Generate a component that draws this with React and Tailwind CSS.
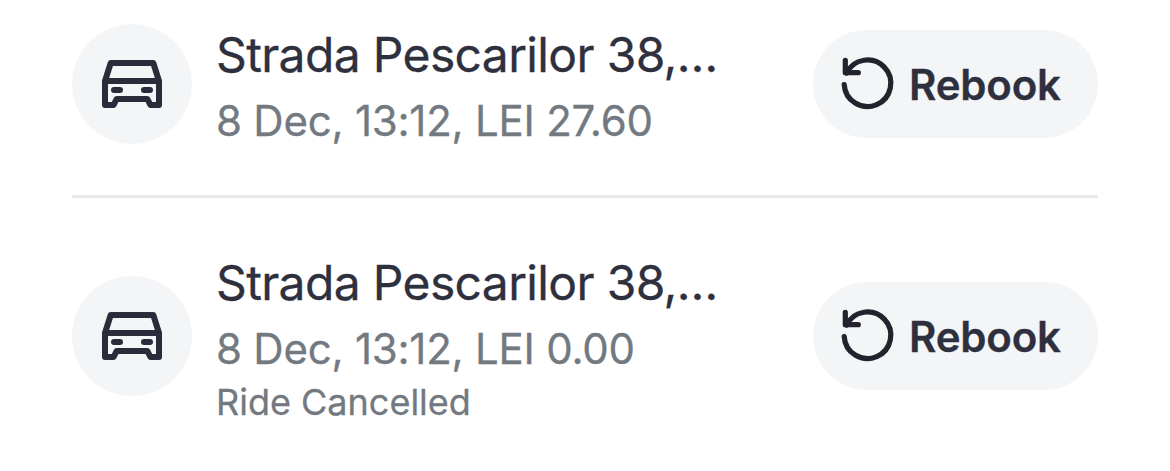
const rides = [
  { id: 1, address: "Strada Pescarilor 38,…", details: "8 Dec, 13:12, LEI 27.60" },
  { id: 2, address: "Strada Pescarilor 38,…", details: "8 Dec, 13:12, LEI 0.00", status: "Ride Cancelled" },
];

function CarIcon() {
  return (
    <svg className="h-12 w-[60px]" viewBox="0 0 60 48" fill="none" stroke="currentColor" strokeWidth="6" strokeLinejoin="round" strokeLinecap="round" aria-hidden="true">
      <path d="M3 21 8.7 3H51.3L57 21V45H48.4L45.4 39H14.6L11.6 45H3ZM3 21H57" />
      <path d="M12 30H18M42 30H48" />
    </svg>
  );
}

function RebookIcon() {
  return (
    <svg className="h-[54px] w-[54px] overflow-visible" viewBox="0 0 54 54" fill="none" stroke="currentColor" strokeWidth="5.2" strokeLinecap="round" strokeLinejoin="round" aria-hidden="true">
      <path d="M3.2 27.5A23.3 23.3 0 1 0 5.5 16.1" />
      <path d="M4.3 3.3V15.7H17.3" />
    </svg>
  );
}

function RideRow({ ride }) {
  return (
    <div className="flex items-center">
      <div className="flex h-[120px] w-[120px] shrink-0 items-center justify-center rounded-full bg-[#f4f5f7] text-[#2b2c3b]">
        <CarIcon />
      </div>
      <div className="ml-6 mt-px -mb-px min-w-0 flex-1 whitespace-nowrap">
        <div className="text-[48px] leading-[72px] tracking-[-0.65px] text-[#2f303e] [-webkit-text-stroke:0.3px_currentColor]">{ride.address}</div>
        <div className="text-[42px] leading-[60px] tracking-[-0.23px] text-[#727980] [-webkit-text-stroke:0.3px_currentColor]">{ride.details}</div>
        {ride.status && <div className="-mt-px pb-px text-[36px] leading-[48px] text-[#727980] [-webkit-text-stroke:0.3px_currentColor]">{ride.status}</div>}
      </div>
      <button className="flex h-[108px] w-[285px] shrink-0 items-center rounded-full bg-[#f4f5f7] pl-7 text-[42px] font-semibold tracking-[-0.2px] text-[#2f303e] [-webkit-text-stroke:0.3px_currentColor]">
        <span className="text-[#22232d]"><RebookIcon /></span>
        <span className="ml-3.5">Rebook</span>
      </button>
    </div>
  );
}

export default function App() {
  return (
    <main className="h-[471px] overflow-hidden bg-white px-[72px] pt-[18px] font-['Inter',sans-serif]">
      <RideRow ride={rides[0]} />
      <div className="mt-[45px] mb-12 h-[3px] bg-[#e8e9ea]" />
      <RideRow ride={rides[1]} />
    </main>
  );
}
